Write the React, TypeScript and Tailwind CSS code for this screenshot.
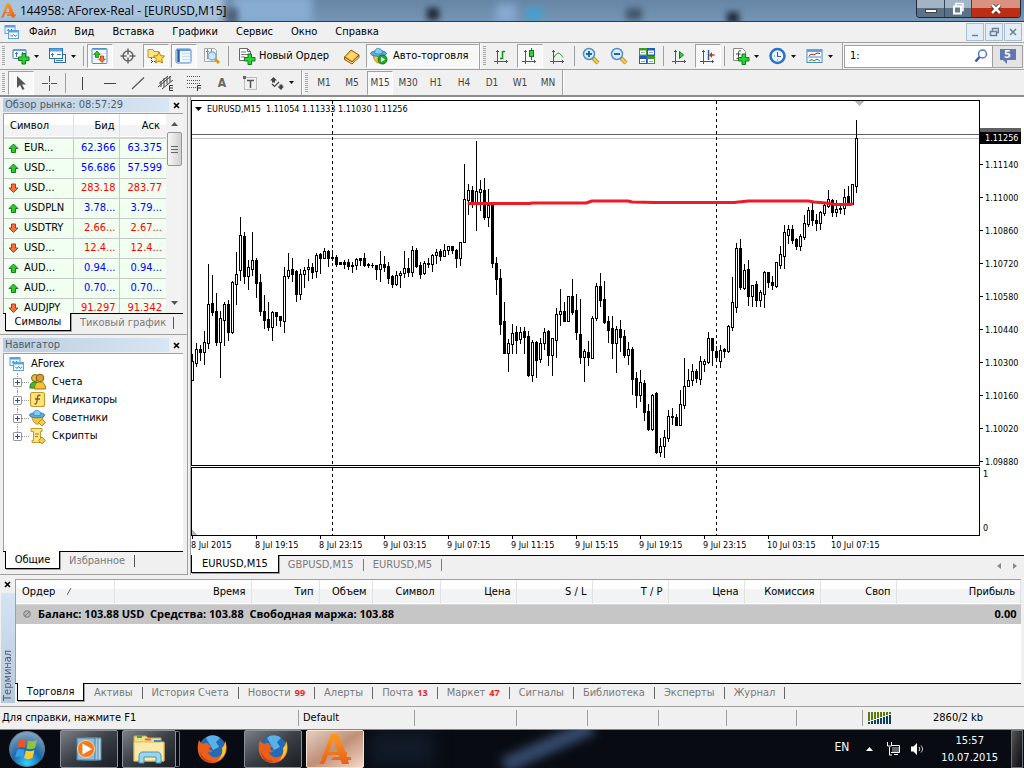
import React from "react";

type Candle = [number, number, number, number, 0 | 1];

const FIRST_X = 192;
const STEP = 4;

/* high, body top, body bottom, low, filled */
const candles: Candle[] = [
  [354,361,380,380,0],[343,349,363,366,0],[345,349,352,360,1],[331,342,352,364,0],[264,304,343,348,0],
  [275,303,312,315,1],[293,311,342,345,1],[311,318,342,377,0],[302,304,320,345,0],[300,304,332,340,1],
  [281,282,332,333,0],[252,274,284,304,0],[217,235,270,280,0],[232,236,276,283,1],[260,267,276,289,0],
  [232,260,269,275,0],[258,260,283,297,1],[274,282,311,315,1],[295,311,320,328,1],[302,319,327,330,1],
  [311,312,327,340,0],[312,312,316,325,1],[316,316,320,326,1],[267,276,321,332,0],[253,270,276,278,0],
  [258,269,274,281,1],[270,271,294,301,1],[269,274,294,299,0],[267,270,274,287,0],[259,267,269,280,0],
  [263,267,272,278,1],[253,255,271,277,0],[253,254,258,273,1],[248,251,258,258,0],[250,251,258,266,1],
  [250,257,258,260,1],[255,257,264,266,1],[262,262,264,264,1],[260,262,264,268,1],[259,262,266,269,1],
  [262,265,266,272,1],[258,259,265,269,0],[258,258,260,265,1],[253,258,265,266,1],[263,264,265,267,1],
  [263,265,265,267,1],[265,265,269,279,1],[251,264,269,281,0],[256,264,267,271,1],[262,266,278,283,1],
  [275,276,284,287,1],[271,275,284,285,0],[271,273,275,287,0],[251,268,273,277,0],[258,268,272,276,1],
  [246,250,272,276,0],[248,250,266,267,1],[262,265,274,278,1],[261,263,273,274,0],[258,263,264,267,1],
  [254,255,264,271,0],[249,252,255,263,0],[249,251,256,260,1],[244,250,256,256,0],[246,246,250,254,0],
  [246,246,250,253,1],[249,250,258,267,1],[242,242,258,265,0],[164,199,242,242,0],[184,190,200,214,0],
  [186,190,202,207,1],[141,191,203,230,0],[180,189,192,210,0],[178,190,217,219,1],[189,205,217,226,0],
  [204,205,263,267,1],[257,263,279,294,1],[269,278,324,334,1],[302,321,353,353,1],[339,343,353,371,0],
  [324,333,344,353,0],[326,332,340,353,1],[327,332,339,343,0],[327,331,337,353,1],[331,336,375,376,1],
  [340,342,375,381,0],[341,342,360,377,1],[338,343,359,362,0],[328,332,343,349,0],[330,331,355,365,1],
  [338,338,355,375,0],[308,314,340,357,0],[289,311,314,325,0],[302,311,321,321,1],[296,296,321,321,0],
  [279,296,312,314,1],[294,310,332,339,1],[299,334,357,363,1],[349,351,357,381,0],[341,352,357,365,1],
  [316,318,358,358,0],[283,286,318,320,0],[273,286,300,306,1],[281,299,322,323,1],[316,321,330,342,1],
  [316,328,343,358,1],[326,329,343,372,0],[320,329,337,351,1],[330,336,355,357,1],[342,349,355,364,0],
  [347,349,379,394,1],[372,378,395,407,1],[370,382,395,401,0],[380,383,412,420,1],[404,411,429,430,1],
  [394,395,429,430,0],[392,393,452,453,1],[438,446,452,456,0],[430,437,446,457,0],[410,416,438,441,0],
  [408,416,417,424,1],[414,417,425,425,1],[390,404,425,425,0],[358,386,405,408,0],[369,380,386,386,0],
  [364,371,380,385,0],[369,371,378,382,1],[356,361,379,384,0],[359,361,364,371,0],[332,338,362,363,0],
  [338,338,350,365,1],[346,351,357,360,1],[345,350,361,367,0],[348,349,351,357,1],[325,326,351,352,0],
  [277,302,327,330,0],[243,248,307,312,0],[239,248,287,289,1],[264,270,288,289,0],[260,269,296,305,1],
  [285,285,296,306,0],[281,284,300,306,1],[290,292,300,306,0],[271,272,294,307,0],[272,272,282,287,1],
  [276,282,285,289,1],[262,262,286,287,0],[246,254,265,268,0],[225,232,256,268,0],[225,229,235,243,0],
  [225,229,240,243,1],[238,239,246,249,1],[234,236,246,250,0],[215,223,237,239,0],[207,210,224,226,0],
  [203,210,220,225,1],[214,220,223,230,1],[211,212,223,229,0],[202,205,213,215,0],[190,199,206,207,0],
  [199,200,212,216,1],[200,209,212,216,0],[204,208,209,213,1],[189,197,208,214,0],[186,196,204,205,1],
  [184,184,204,204,0],[120,138,186,192,0],
];

const prices = ["1.11140","1.11000","1.10860","1.10720","1.10580","1.10440","1.10300","1.10160","1.10020","1.09880"];
const times = ["8 Jul 2015","8 Jul 19:15","8 Jul 23:15","9 Jul 03:15","9 Jul 07:15","9 Jul 11:15","9 Jul 15:15","9 Jul 19:15","9 Jul 23:15","10 Jul 03:15","10 Jul 07:15"];

const quotes: { s: string; bid: string; ask: string; up: boolean }[] = [
  { s: "EUR...", bid: "62.366", ask: "63.375", up: true },
  { s: "USD...", bid: "56.686", ask: "57.599", up: true },
  { s: "USD...", bid: "283.18", ask: "283.77", up: false },
  { s: "USDPLN", bid: "3.78...", ask: "3.79...", up: true },
  { s: "USDTRY", bid: "2.66...", ask: "2.67...", up: false },
  { s: "USD...", bid: "12.4...", ask: "12.4...", up: false },
  { s: "AUD...", bid: "0.94...", ask: "0.94...", up: true },
  { s: "AUD...", bid: "0.70...", ask: "0.70...", up: true },
  { s: "AUDJPY", bid: "91.297", ask: "91.342", up: false },
];

/* ---------- drawings ---------- */

function Svg({ w = 18, h = 18, children }: { w?: number; h?: number; children: React.ReactNode }) {
  return (
    <svg width={w} height={h} viewBox={`0 0 ${w} ${h}`} fill="none" className="block shrink-0" aria-hidden="true">
      {children}
    </svg>
  );
}

const Plus = ({ x, y }: { x: number; y: number }) => (
  <path transform={`translate(${x} ${y})`} d="M4 .5h3.500V4H11v3.500H7.500V11H4V7.500H.5V4H4Z" fill="#2fd23a" stroke="#0b7d12" />
);

const ALogo = ({ size = 16 }: { size?: number }) => (
  <svg width={size} height={size} viewBox="0 0 32 32" className="block shrink-0" aria-hidden="true">
    <defs>
      <linearGradient id="alogo" x1="0" y1="0" x2="0" y2="1"><stop offset="0" stopColor="#fb9a20" /><stop offset="1" stopColor="#e8601c" /></linearGradient>
    </defs>
    <path fill="url(#alogo)" d="M12 1h7l7.500 18H28v3h-1l1 2h4v3h-3l1 4h-7l-1.500-4H12l2-3h6.500l-1-2H8l2-3h8.500L14.500 7 6 29.500 4.500 31H0l2-3Z" />
  </svg>
);

const DocCharts = () => (
  <Svg w={16} h={16}>
    <rect x="1" y="1.500" width="10" height="8" fill="#eaf4fc" stroke="#5ba2e0" />
    <path d="M1 2.500h10" stroke="#5ba2e0" strokeWidth="2" />
    <path d="M3 6.500l2-1 1 1.500 2-2" stroke="#2d78bd" />
    <rect x="4.500" y="6.500" width="10" height="8" fill="#fff" stroke="#5ba2e0" />
    <path d="M4.500 7.500h10" stroke="#5ba2e0" strokeWidth="2" />
    <path d="M6 10.500l2 2 1.500-2 2 2 1.500-2" stroke="#2d78bd" />
  </Svg>
);

const NewChartIcon = () => (
  <Svg>
    <rect x="1" y="2.500" width="13" height="9" rx="1" fill="#fff" stroke="#3a78b8" />
    <path d="M1 3h13" stroke="#5b9fdc" strokeWidth="2" />
    <path d="M4.500 5v5M3 6.500h3M10.500 5v3" stroke="#4a78a8" />
    <Plus x={6} y={6} />
  </Svg>
);
const ProfilesIcon = () => (
  <Svg>
    <rect x="5.500" y="7.500" width="11" height="8" fill="#e9f3fb" stroke="#2b6cab" />
    <rect x=".5" y="1.500" width="13" height="10" fill="#fff" stroke="#2b6cab" />
    <path d="M1 3h12" stroke="#5ea4df" strokeWidth="3" />
    <path d="M3.500 6v4M2 7.500h3M8 7.500h4M7 13.500h7" stroke="#4a78a8" />
  </Svg>
);
const MarketIcon = () => (
  <Svg>
    <rect x="1" y="1.500" width="15" height="15" rx="1" fill="#f7fbff" stroke="#4a90d0" />
    <path d="M1.500 2h14" stroke="#4a90d0" strokeWidth="1.500" />
    <path d="M3 6.500h12M3 9.500h12M3 12.500h12" stroke="#dbe6f0" />
    <path d="M6 4 9.300 7.500H7.500v3h-3v-3H2.700Z" fill="#31c32b" stroke="#17791a" strokeWidth=".8" />
    <path d="M11 15.500 7.700 12h1.800V9h3v3h1.800Z" fill="#f9753d" stroke="#b03800" strokeWidth=".8" />
  </Svg>
);
const TargetIcon = () => (
  <Svg>
    <circle cx="9" cy="9" r="5" stroke="#666" strokeWidth="1.500" />
    <path d="M9 1.500v6M9 10.500v6M1.500 9h6M10.500 9h6" stroke="#666" strokeWidth="1.500" />
  </Svg>
);
const StarFolderIcon = () => (
  <Svg>
    <path d="M1 2.500h5l1 2h5v6H1Z" fill="#f9e58a" stroke="#c39a14" />
    <path d="M4.500 11v6M5 14.500h3" stroke="#333" strokeDasharray="1 1" />
    <path d="m12 5 1.700 3.600 3.800.5-2.800 2.700.8 4.200-3.500-2-3.500 2 .8-4.200L6.500 9.100l3.800-.5Z" fill="#ffd94e" stroke="#b9820a" />
  </Svg>
);
const NavIcon = () => (
  <Svg>
    <rect x="1" y="2" width="15" height="14" rx="1.500" fill="#eef6fe" stroke="#4a86c4" />
    <path d="M1.500 3h14" stroke="#5c9edc" strokeWidth="2" />
    <path d="M3.500 3v12" stroke="#2a5fa0" strokeWidth="2.500" />
    <path d="M7 6.500h8M7 9.500h8M7 12.500h8" stroke="#cfdeec" />
  </Svg>
);
const TesterIcon = () => (
  <Svg>
    <path d="M1.500 1.500h10l2 2v11h-12Z" fill="#f2f2f2" stroke="#a8a8a8" />
    <path d="M4.500 2v10M8.500 2v10M3 4.500h3M7 7.500h3" stroke="#888" />
    <path d="m12 12 4 4" stroke="#d19d1b" strokeWidth="3" />
    <circle cx="9" cy="9" r="4" fill="#cfe7fa" stroke="#7fb0da" strokeWidth="1.500" />
  </Svg>
);
const OrderIcon = () => (
  <Svg>
    <path d="M1.500 1.500h8l3 3v9h-11Z" fill="#fff" stroke="#666" />
    <path d="M9.500 1.500v3h3" stroke="#666" />
    <path d="M3 5h5M3 7.500h7M3 10h4" stroke="#777" />
    <Plus x={6} y={6.500} />
  </Svg>
);
const BookIcon = () => (
  <Svg>
    <path d="M1.500 10 8 3l8 5-7 7Z" fill="#f3b83c" stroke="#9a6207" />
    <path d="M1.500 10v2.500L9 17l7-6.500V8l-7 7Z" fill="#c27c14" stroke="#8a5606" />
    <path d="m3.500 9.800 5-5.300 5.500 3.500-5 5Z" fill="#ffd976" />
    <path d="m2 11.500 7 4.500 6.500-6" stroke="#ffe9a8" />
  </Svg>
);
const Hat = () => (
  <>
    <path d="M3 8c1 5 3 8 6 8s5-4 6-8Z" fill="#f2c83c" stroke="#b98a12" />
    <ellipse cx="8.500" cy="6.500" rx="8" ry="2.800" fill="#5aaee0" stroke="#2f80b4" />
    <path d="M4.500 6C5 2 6.500 1 8.500 1.500S12 2 12.500 6c-2 1.500-6 1.500-8 0Z" fill="#86cdf2" stroke="#2f80b4" strokeWidth=".8" />
  </>
);
const AutoIcon = () => (
  <Svg>
    <Hat />
    <circle cx="12.500" cy="12.500" r="4.500" fill="#25ab2a" stroke="#0d7413" />
    <path d="m11 10 4 2.500-4 2.500Z" fill="#fff" />
  </Svg>
);
const Axes = () => <path d="M4.500 3v14M1 14.500h14M3 4.500h3M13.500 13v3" stroke="#555" />;
const BarsIcon = () => (<Svg><Axes /><path d="M9.500 4v8M9.500 4.500H12M7 11.500h2.500" stroke="#119016" strokeWidth="1.500" /></Svg>);
const CandleIcon = () => (<Svg><Axes /><path d="M10.500 1v12" stroke="#0b7d12" /><rect x="8.500" y="3.500" width="4" height="6" fill="#2fd23a" stroke="#0b7d12" /></Svg>);
const LineIcon = () => (<Svg><Axes /><path d="M4.500 11c2-3 4-6 6-4.500S13 9 14 10.500" stroke="#119016" /></Svg>);
const ZoomIcon = ({ plus }: { plus?: boolean }) => (
  <Svg>
    <path d="m11 11 5 5" stroke="#b08a20" strokeWidth="4" />
    <path d="m11 11 5 5" stroke="#f2ca43" strokeWidth="2.500" />
    <circle cx="7" cy="7" r="5.500" fill="#d8eefc" stroke="#4d8fcb" strokeWidth="1.500" />
    <path d={plus ? "M4 7h6M7 4v6" : "M4 7h6"} stroke="#2465a4" strokeWidth="2" />
  </Svg>
);
const TileIcon = () => (
  <Svg>
    <rect x="1" y="1" width="8" height="8" fill="#3d9a24" /><rect x="9" y="1" width="8" height="8" fill="#2458c7" />
    <rect x="1" y="9" width="8" height="8" fill="#2458c7" /><rect x="9" y="9" width="8" height="8" fill="#3d9a24" />
    <path d="M2 5.500h6M10 5.500h6M2 14h6M10 14h6" stroke="#fff" strokeWidth="4" />
    <path d="M3 5.500h4M11 5.500h4M3 14.500h4M11 14.500h4" stroke="#9ab" />
  </Svg>
);
const ScrollIcon = () => (<Svg><Axes /><path d="m8.500 4.500 4 3.500-4 3.500Z" fill="#2fd23a" stroke="#0b7d12" /></Svg>);
const ShiftIcon = () => (
  <Svg><Axes /><path d="M9.500 3v10" stroke="#1c62ad" strokeWidth="1.500" /><path d="M10 8 13 5v6Z" fill="#c43a10" /><path d="M12 8h3.500" stroke="#c43a10" strokeWidth="1.500" /></Svg>
);
const IndicatorIcon = () => (
  <Svg>
    <path d="M1.500 1.500h9l3 3v9h-12Z" fill="#fff" stroke="#888" />
    <path d="M9 4c-3-1-2.500 2-2.500 4s0 4-2 3.500M4 7h4.500" stroke="#333" />
    <Plus x={6} y={6.500} />
  </Svg>
);
const ClockIcon = () => (
  <Svg>
    <circle cx="8.500" cy="9" r="7" fill="#e8f4ff" stroke="#2a72c8" strokeWidth="2.500" />
    <path d="M8.500 5v4.500H12" stroke="#555" />
    <path d="M5 9h1M8.500 12.500v1" stroke="#777" />
  </Svg>
);
const TemplateIcon = () => (
  <Svg>
    <rect x="1" y="2.500" width="15" height="13" fill="#fff" stroke="#4a86c4" />
    <path d="M1 3.500h15" stroke="#5ea4df" strokeWidth="3" />
    <path d="m3 8.500 3-1.500 2 1 3-2 3 .5" stroke="#9a2010" />
    <path d="M2 10h13" stroke="#4a86c4" />
    <path d="m3 14 3-1.500 2 1.500 3-2 3 2" stroke="#1a8a20" />
  </Svg>
);
const Arrow = ({ up }: { up: boolean }) => (
  <Svg w={11} h={11}>
    {up ? (
      <path d="M5.500 1 10 5.500H7.500v4h-4v-4H1Z" fill="#35c435" stroke="#147b18" strokeWidth="1" />
    ) : (
      <path d="M5.500 9.500 1 5h2.500V1h4v4H10Z" fill="#f8703c" stroke="#ab3c10" strokeWidth="1" />
    )}
  </Svg>
);

/* line studies */
const CursorIcon = () => <Svg w={16} h={16}><path d="M4 1v12l3-3 2.500 5 2-1L9 9.500h4Z" fill="#555" /></Svg>;
const CrossIcon = () => <Svg w={16} h={16}><path d="M8.500 1v6M8.500 10v6M1 8.500h6M10 8.500h6M8 8.500h1" stroke="#555" /></Svg>;
const VLineIcon = () => <Svg w={16} h={16}><path d="M8.500 2v13" stroke="#444" /></Svg>;
const HLineIcon = () => <Svg w={16} h={16}><path d="M2 8.500h12" stroke="#444" /></Svg>;
const DiagIcon = () => <Svg w={16} h={16}><path d="M2 14 14 2.500" stroke="#555" strokeWidth="1.200" /></Svg>;
const ChannelIcon = () => (
  <Svg w={16} h={16}>
    <path d="M0 12 13 1M1 8.500 10 1M4 14 15 5M3 6v6M6 3v9M9 2v7M12 1v6" stroke="#444" />
    <path d="M15 10.500h-3.500v5H15M12 13h3" stroke="#333" />
  </Svg>
);
const FibIcon = () => (
  <Svg w={16} h={16}>
    <path d="M1 1.500h13M1 5.500h13M1 8.500h13M1 12.500h9" stroke="#555" strokeDasharray="1 1" />
    <path d="M11.500 16v-5.500H15M12 13h3" stroke="#333" />
  </Svg>
);
const TextBoxIcon = () => (
  <Svg w={16} h={16}>
    <rect x="2.500" y="2.500" width="12" height="12" stroke="#888" strokeDasharray="1 1" />
    <path d="M1 1h3v3H1z" fill="#666" />
    <path d="M5 5.500h7M8.500 6v7" stroke="#555" strokeWidth="1.500" />
  </Svg>
);
const ArrowsIcon = () => (
  <Svg w={16} h={16}>
    <path d="M4.500 2 8 5.500H6v2H3v-2H1ZM12 15 8.500 11.500h2v-2h3v2H15Z" fill="#444" />
    <path d="m3 9 2.500 2.500L10 7" stroke="#444" strokeWidth="1.200" />
  </Svg>
);

const AccountsIcon = () => (
  <Svg>
    <circle cx="6" cy="5" r="3.500" fill="#e8b74d" stroke="#8a6510" /><path d="M1 15c0-5 2-6 5-6s5 2 5 6Z" fill="#3fbf30" stroke="#1c7c18" />
    <circle cx="11" cy="5" r="3.800" fill="#d9a030" stroke="#7c5a0c" /><path d="M5.500 16c0-5 2-7 5.500-7s5.500 2 5.500 7Z" fill="#f3c437" stroke="#9a7208" />
  </Svg>
);
const FxIcon = () => (
  <Svg>
    <rect x="1.500" y="1.500" width="14" height="14" rx="2" fill="#fbe27a" stroke="#c49a2a" strokeWidth="1.200" />
    <path d="M11.500 4.500c-3-1-3 1-3.300 4s-.7 5-2.700 4.500M6 8h5" stroke="#7c5c10" strokeWidth="1.300" />
  </Svg>
);
const AdvisorIcon = () => <Svg><g transform="scale(.95)"><Hat /></g><path d="m13 10 3.500 3.500L13 17l-3.500-3.500Z" fill="#f4cf4a" stroke="#b88c1a" /></Svg>;
const ScriptIcon = () => (
  <Svg>
    <path d="M2 1.500h11v3h-1.500v9H13v2H3v-2h1.500v-9H2Z" fill="#fbe68c" stroke="#c09a24" />
    <path d="M6 7h4M6 9.500h3" stroke="#a8801c" />
    <path d="m13 10 3.500 3.500L13 17l-3.500-3.500Z" fill="#f4cf4a" stroke="#b88c1a" />
  </Svg>
);
const Firefox = () => (
  <Svg w={32} h={32}>
    <circle cx="16.500" cy="16" r="13.500" fill="#2469b5" />
    <path d="M10 5c4-4 11-3 14 0l-4 4 3 5-6 3Z" fill="#5ab0e8" />
    <path d="M3 7c-2 6-2 13 2 18 5 6 15 7 21 1 5-5 6-12 3-18 0 3-1 4-1 4 0 6-2 11-7 12-5 1-8-2-9-5 2 1 4 0 5-1-2 0-4-1-4-3 0-1 2-1 3-2-3-1-4-1-4-3-3 0-4 0-5 1-2-1-3-2-4-4Z" fill="#e8601c" />
    <path d="M29 8c3 8 0 17-8 20 4-3 6-8 5-13 2-2 3-4 3-7Z" fill="#fbc52c" />
    <path d="M4 18c2 7 7 10 13 10-7 3-13-3-13-10Z" fill="#c53c12" />
  </Svg>
);
const Caret = () => <Svg w={5} h={3}><path d="M0 0h5L2.500 3Z" fill="#111" /></Svg>;
const CloseX = () => <Svg w={7} h={7}><path d="m1 1 5 5M6 1 1 6" stroke="#000" strokeWidth="1.700" /></Svg>;

/* ---------- toolbar parts ---------- */

const pressed = "border border-[#a0a0a0] border-r-white border-b-white bg-[#f8f8f8]";

function Tool({ label, on, children }: { label: string; on?: boolean; children: React.ReactNode }) {
  return (
    <button aria-label={label} className={`mx-px flex h-6 w-[26px] shrink-0 items-center justify-center text-[#444] ${on ? pressed : ""}`}>
      {children}
    </button>
  );
}
function DropTool({ label, children }: { label: string; children: React.ReactNode }) {
  return (
    <button aria-label={label} className="flex h-6 w-[37px] shrink-0 items-center gap-1 pl-[5px]">
      {children}
      <Caret />
    </button>
  );
}
const Sep = () => <div className="mx-[2px] h-5 w-px shrink-0 bg-[#a0a0a0]" />;
const Grip = () => (
  <div className="mx-[2px] h-5 w-[3px] shrink-0 bg-[repeating-linear-gradient(to_bottom,#a8a8a8_0px,#a8a8a8_1px,#f0f0f0_1px,#f0f0f0_2px)]" />
);
const BandEnd = () => <div className="w-[2px] shrink-0 self-stretch border-l border-[#a0a0a0] bg-white" />;

function PanelTitle({ children, close }: { children: React.ReactNode; close: string }) {
  return (
    <div className="flex h-4 items-center">
      <h2 className="flex h-[14px] flex-1 items-center bg-linear-to-r from-[#bccede] to-[#d8e5f3] pl-[2px] text-[#4c5c6c]">{children}</h2>
      <button aria-label={close} className="flex w-[14px] items-center justify-center"><CloseX /></button>
    </div>
  );
}

const tabOn = "relative -top-px h-[18px] border border-t-0 border-black bg-white text-black shadow-[1px_1px_0_#a0a0a0]";

/* ---------- chart ---------- */

function PricePlot() {
  return (
    <svg width="100%" height="100%" shapeRendering="crispEdges" className="absolute inset-0 block" role="img" aria-label="EURUSD M15">
      <g transform="translate(-192 -101)">
        <path d="M192 134.500H2000" stroke="#606060" />
        <path d="M192 138.500H2000" stroke="#c0c0c0" />
        <path d="M332.500 101V1200M716.500 101V1200" stroke="#000" strokeDasharray="3 3" />
        {candles.map(([hi, top, bot, lo, fill], i) => {
          const x = FIRST_X + i * STEP;
          const h = bot - top + 1;
          return (
            <g key={x}>
              <rect x={x} y={hi} width="1" height={lo - hi + 1} fill="#000" />
              <rect x={x - 1} y={top} width="3" height={h} fill="#000" />
              {!fill && h > 2 && <rect x={x} y={top + 1} width="1" height={h - 2} fill="#fff" />}
            </g>
          );
        })}
        <path d="M855 101h9l-4.500 5Z" fill="#b8b8b8" />
        <path
          d="M469 203.500H530L532 203 586 203 592 201 628 201 632 202 655 202.500H734L748 201H808L814 202 826 203 836 204.500H850L852 204"
          fill="none" stroke="#ed1c24" strokeWidth="3" strokeLinecap="round" strokeLinejoin="round" shapeRendering="auto"
        />
      </g>
    </svg>
  );
}

function ChartArea() {
  return (
    <section className="flex min-w-0 flex-1 flex-col border-l border-[#a0a0a0] bg-white">
      <div className="flex min-h-0 flex-1 pt-[3px] pr-[3px]">
        <div className="flex min-w-0 flex-1 flex-col">
          <div className="relative min-h-0 flex-1 overflow-hidden border border-black">
            <PricePlot />
            <h1 className="relative flex h-[15px] items-center gap-[5px] pl-[3px] text-[9px] text-black">
              <Svg w={7} h={4}><path d="M0 0h7L3.500 4Z" fill="#000" /></Svg>
              <span className="whitespace-pre">EURUSD,M15  1.11054 1.11333 1.11030 1.11256</span>
            </h1>
          </div>
          <div className="relative mt-px h-[69px] shrink-0 border border-black">
            <svg width="100%" height="100%" className="block" shapeRendering="crispEdges" aria-hidden="true">
              <path d="M140.500 0v80M524.500 0v80" stroke="#000" strokeDasharray="3 3" />
              <path d="M0 62l5 5H0Z" fill="#b8b8b8" />
            </svg>
          </div>
          <ol className="flex h-[19px] shrink-0 overflow-hidden text-[9px] leading-[18px]">
            {times.map((t) => (
              <li key={t} className="relative w-16 shrink-0 whitespace-nowrap before:absolute before:left-px before:top-0 before:h-[3px] before:w-px before:bg-black">
                {t}
              </li>
            ))}
          </ol>
        </div>
        <div className="flex w-[41px] shrink-0 flex-col text-[9px]">
          <div className="mt-[28px] h-[4px] shrink-0 bg-[#606060]" />
          <div className="h-3 shrink-0 bg-black pl-[5px] leading-3 text-white">1.11256</div>
          <ol className="mt-1 -mb-4 shrink-0">
            {prices.map((p) => (
              <li key={p} className="flex h-[33px] items-center before:mr-[2px] before:h-px before:w-[3px] before:bg-black">{p}</li>
            ))}
          </ol>
          <div className="mt-auto mb-[21px] flex h-[66px] shrink-0 flex-col justify-between pl-[3px] leading-[12px]">
            <span>1</span>
            <span>0</span>
          </div>
        </div>
      </div>
      <nav aria-label="Графики" className="flex h-[20px] shrink-0 items-start border-t border-black bg-[#f0f0f0] text-[#7a7a7a]">
        <button className={`${tabOn} mr-[9px] px-[10px]`}>EURUSD,M15</button>
        <button className="h-[18px]">GBPUSD,M15</button>
        <i className="mx-[9px] mt-[3px] h-3 w-px bg-[#7a7a7a]" />
        <button className="h-[18px]">EURUSD,M5</button>
        <i className="mx-[9px] mt-[3px] h-3 w-px bg-[#7a7a7a]" />
        <span className="mr-[7px] ml-auto flex gap-3 pt-[7px]">
          <Svg w={4} h={6}><path d="M4 0v6L0 3Z" fill="#888" /></Svg>
          <Svg w={4} h={6}><path d="M0 0v6l4-3Z" fill="#888" /></Svg>
        </span>
      </nav>
    </section>
  );
}

/* ---------- side panels ---------- */

function MarketWatch() {
  return (
    <section className="flex h-[238px] shrink-0 flex-col border-b border-[#a0a0a0] pl-[3px] pr-1">
      <PanelTitle close="Закрыть обзор рынка">Обзор рынка: 08:57:29</PanelTitle>
      <div className="flex h-[200px] shrink-0 border-t border-l border-[#a0a0a0] bg-white">
        <div className="h-full flex-1 overflow-hidden">
          <table className="w-full table-fixed border-collapse">
            <thead>
              <tr className="h-6 border-b-2 border-[#d4d4d4] bg-linear-to-b from-white from-50% to-[#f1f3f5] to-50%">
                <th className="w-[69px] border-r border-[#dfdfdf] pl-[6px] text-left font-normal">Символ</th>
                <th className="w-[46px] border-r border-[#dfdfdf] pr-1 text-right font-normal">Бид</th>
                <th className="pr-[6px] text-right font-normal">Аск</th>
              </tr>
            </thead>
            <tbody>
              {quotes.map((q, i) => (
                <tr key={i} className={`h-5 border-b border-[#c8c8c8] bg-[#f0fff0] ${q.up ? "text-[#0000ff]" : "text-[#ff0000]"}`}>
                  <td className="border-r border-[#c8c8c8] pl-1 text-black"><span className="flex items-center gap-[5px]"><Arrow up={q.up} />{q.s}</span></td>
                  <td className="border-r border-[#c8c8c8] pr-[3px] text-right">{q.bid}</td>
                  <td className="pr-1 text-right">{q.ask}</td>
                </tr>
              ))}
            </tbody>
          </table>
        </div>
        <div className="flex w-[17px] flex-col items-center justify-between bg-[#f2f2f2] py-2">
          <Svg w={7} h={4}><path d="M0 4h7L3.500 0Z" fill="#555" /></Svg>
          <div className="mt-[6px] mb-auto flex h-[34px] w-[15px] flex-col items-center justify-center gap-px rounded-[2px] border border-[#979797] bg-linear-to-r from-[#f6f6f6] to-[#d0d0d0]">
            <i className="h-px w-[7px] bg-[#666]" /><i className="mt-px h-px w-[7px] bg-[#666]" /><i className="mt-px h-px w-[7px] bg-[#666]" />
          </div>
          <Svg w={7} h={4}><path d="M0 0h7L3.500 4Z" fill="#555" /></Svg>
        </div>
      </div>
      <nav aria-label="Обзор рынка" className="flex h-5 items-start border-t border-black text-[#7a7a7a]">
        <button className={`${tabOn} ml-[2px] mr-[9px] w-[66px] shrink-0`}>Символы</button>
        <button className="h-[18px] whitespace-nowrap">Тиковый график</button>
        <i className="ml-[7px] mt-[3px] h-3 w-px bg-[#555]" />
      </nav>
    </section>
  );
}

function Navigator() {
  const items = [
    ["Счета", <AccountsIcon key="a" />],
    ["Индикаторы", <FxIcon key="b" />],
    ["Советники", <AdvisorIcon key="c" />],
    ["Скрипты", <ScriptIcon key="d" />],
  ] as const;
  return (
    <section className="flex min-h-0 flex-1 flex-col border-b border-[#a0a0a0] pl-[3px] pr-1 pt-[2px]">
      <PanelTitle close="Закрыть навигатор">Навигатор</PanelTitle>
      <div className="min-h-0 flex-1 border-t border-l border-[#a0a0a0] bg-white pt-px">
        <div className="flex h-[18px] items-center gap-[6px] pl-[5px]"><DocCharts />AForex</div>
        <ul>
          {items.map(([name, icon], i) => (
            <li key={name} className="flex h-[18px] items-center">
              <span className={`ml-[13px] w-px self-stretch border-l border-dotted border-[#999] ${i === 3 ? "mb-[9px]" : ""}`} />
              <button aria-label={`Развернуть ${name}`} className="relative -ml-[5px] flex size-[9px] items-center justify-center rounded-[1px] border border-[#979797] bg-white">
                <svg width="5" height="5" className="block" aria-hidden="true"><path d="M0 2.500h5M2.500 0v5" stroke="#2a4ea0" /></svg>
              </button>
              <i className="w-[7px] border-t border-dotted border-[#999]" />
              {icon}
              <span className="ml-[5px]">{name}</span>
            </li>
          ))}
        </ul>
      </div>
      <nav aria-label="Навигатор" className="flex h-[23px] shrink-0 items-start border-t border-black text-[#7a7a7a]">
        <button className={`${tabOn} ml-[2px] mr-[9px] w-[55px]`}>Общие</button>
        <button className="h-[18px]">Избранное</button>
        <i className="ml-[9px] mt-[3px] h-3 w-px bg-[#555]" />
      </nav>
    </section>
  );
}

/* ---------- terminal ---------- */

function Terminal() {
  const cols: [string, string][] = [
    ["Время", "w-[137px]"], ["Тип", "w-[68px]"], ["Объем", "w-[53px]"], ["Символ", "w-[68px]"], ["Цена", "w-[76px]"],
    ["S / L", "w-[76px]"], ["T / P", "w-[76px]"], ["Цена", "w-[76px]"], ["Комиссия", "w-[76px]"], ["Своп", "w-[76px]"], ["Прибыль", ""],
  ];
  const tabs: [string, string?][] = [
    ["Активы"], ["История Счета"], ["Новости", "99"], ["Алерты"], ["Почта", "13"], ["Маркет", "47"],
    ["Сигналы"], ["Библиотека"], ["Эксперты"], ["Журнал"],
  ];
  return (
    <section className="flex h-[132px] shrink-0 border-b border-[#a0a0a0] pr-[3px]">
      <div className="flex w-[15px] shrink-0 flex-col items-center pb-[3px]">
        <button aria-label="Закрыть терминал" className="flex h-[18px] shrink-0 items-center justify-center"><CloseX /></button>
        <h2 className="flex min-h-0 w-[14px] flex-1 items-center bg-linear-to-b from-[#d4e4f4] to-[#b8c8dc] text-[#4c5c6c] [writing-mode:vertical-rl]">
          <span className="h-full rotate-180 pt-[2px] leading-[14px]">Терминал</span>
        </h2>
      </div>
      <div className="flex min-w-0 flex-1 flex-col pt-1">
        <div className="min-h-0 flex-1 border-t border-l border-[#a0a0a0] bg-white">
          <table className="w-full table-fixed border-collapse">
            <thead>
              <tr className="h-6 border-b border-[#d4d4d4] bg-linear-to-b from-white from-40% to-[#f1f3f5] to-40%">
                <th className="w-[98px] border-r border-[#e2e2e2] pl-[6px] text-left font-normal">
                  <span className="flex items-center gap-3">Ордер<Svg w={8} h={7}><path d="M0 7 4 0" stroke="#666" /></Svg></span>
                </th>
                {cols.map(([c, w], i) => (
                  <th key={i} className={`${w} border-r border-[#e2e2e2] pr-[5px] text-right font-normal`}>{c}</th>
                ))}
              </tr>
            </thead>
            <tbody>
              <tr className="h-5 bg-[#c6c6c6] font-['Open_Sans',sans-serif] font-bold">
                <td colSpan={11} className="pl-[7px]">
                  <span className="flex items-center gap-[7px] whitespace-pre">
                    <Svg w={8} h={8}><circle cx="4" cy="4" r="3.300" fill="#bbb" stroke="#777" /><path d="m2 6 4-4" stroke="#777" /></Svg>
                    Баланс: 103.88 USD  Средства: 103.88  Свободная маржа: 103.88
                  </span>
                </td>
                <td className="pr-1 text-right">0.00</td>
              </tr>
            </tbody>
          </table>
        </div>
        <nav aria-label="Терминал" className="flex h-[23px] shrink-0 items-start border-t border-black text-[#7a7a7a]">
          <button className={`${tabOn} ml-[2px] mr-[10px] w-[67px] shrink-0`}>Торговля</button>
          {tabs.map(([t, n]) => (
            <React.Fragment key={t}>
              <button className="h-[18px] whitespace-nowrap">{t}{n && <b className="ml-1 font-['Open_Sans',sans-serif] text-[9px] text-[#f02020]">{n}</b>}</button>
              <i className="mx-[9px] mt-[3px] h-3 w-px bg-[#666]" />
            </React.Fragment>
          ))}
        </nav>
      </div>
    </section>
  );
}

/* ---------- taskbar ---------- */

const taskBtn = "flex h-[38px] items-center justify-center rounded-[2px] border border-[#8a9098] bg-linear-to-br from-[#7c8188] via-[#3a3f46] to-[#1a1e25]";

function Taskbar() {
  return (
    <footer className="relative flex h-[39px] shrink-0 items-center overflow-hidden border-t border-[#7a8a94] bg-[#080c12] text-white">
      <div className="absolute top-2 left-[500px] h-4 w-24 -rotate-[24deg] bg-[#34486a] blur-[5px]" />
      <div className="absolute top-0 left-[370px] h-9 w-16 bg-[#111a28] blur-[8px]" />
      <button aria-label="Пуск" className="relative ml-2 mr-[14px]">
        <Svg w={38} h={38}>
          <defs>
            <radialGradient id="orb" cx=".5" cy=".9" r=".9"><stop offset="0" stopColor="#2fd4ff" /><stop offset=".45" stopColor="#1668ac" /><stop offset="1" stopColor="#8ea7bd" /></radialGradient>
          </defs>
          <circle cx="19" cy="19" r="17.500" fill="url(#orb)" stroke="#5c7890" />
          <path d="M11 10c3-1.500 5-1 7.500 0L17 18c-3-1.500-5-1-8 0Z" fill="#e8562a" />
          <path d="M20 10.500c3 1 6 1 9-.5l-2 8c-3 1.500-6 1.500-8.500.5Z" fill="#8cc63c" />
          <path d="M9 20c3-1.500 5-1 7.500 0L15 27.500c-3-1.500-5-1-8 0Z" fill="#3d9ae8" />
          <path d="M18 20.500c3 1 5 1 8.500-.5l-2 8c-3 1.500-5.500 1.500-8.500 0Z" fill="#fbcb2e" />
        </Svg>
      </button>
      <button aria-label="Проигрыватель" className={`${taskBtn} relative mr-1 w-[58px]`}>
        <Svg w={32} h={32}>
          <path d="M12 5h16v22H12Z" fill="#b9d6e8" stroke="#5b8cab" /><path d="M9 5h16v22H9Z" fill="#a4cbe2" stroke="#5b8cab" /><path d="M4 5h18v22H4Z" fill="#8fbcd8" stroke="#4a80a4" />
          <circle cx="13" cy="16" r="8.500" fill="#f47a1c" stroke="#fbd0a0" /><path d="m9.500 10.500 9.500 5.500-9.500 5.500Z" fill="#fff" />
        </Svg>
      </button>
      <button aria-label="Проводник" className={`${taskBtn} relative w-[54px]`}>
        <Svg w={34} h={32}>
          <path d="M2 3h12l2 2h13v5h3v18H2Z" fill="#f5dd8a" stroke="#c8a84c" /><path d="M2 9h30v19H2Z" fill="#fbeaa8" stroke="#d8b95e" />
          <path d="M5 4h5" stroke="#3aa83a" strokeWidth="2" /><path d="M13 6.500h6" stroke="#e06a3a" strokeWidth="2" /><path d="M22 8h7" stroke="#3a8ad8" strokeWidth="2" />
          <path d="M7 30v-7c0-3 2-4 4-4h14c2 0 4 1 4 4v7h-5v-6H12v6Z" fill="#9ad4ef" stroke="#4a94b8" />
        </Svg>
      </button>
      <i className="relative h-9 w-1 rounded-r-[2px] border border-l-0 border-[#70767e]" />
      <button aria-label="Firefox" className="relative mx-[16px]"><Firefox /></button>
      <button aria-label="Firefox окно" className={`${taskBtn} relative mr-1 w-[58px]`}><Firefox /></button>
      <button aria-label="AForex" className="relative flex h-[38px] w-[58px] items-center justify-center rounded-[2px] border border-[#fbe4d2] bg-linear-to-br from-[#e0cfc4] via-[#c09078] to-[#f2d8c8]"><ALogo size={32} /></button>
      <span className="relative ml-auto pb-1 text-[12px]">EN</span>
      <span className="relative ml-[17px] flex items-center gap-[13px]">
        <Svg w={7} h={4}><path d="M0 4h7L3.500 0Z" fill="#fff" /></Svg>
        <Svg w={15} h={14}><path d="M5 3.500h8.500v7H5M8 12.500h4M3.500 5v8H6M1.500 0v4h4V0" stroke="#fff" /><path d="M6 5h7v5H6z" fill="#666" /></Svg>
      </span>
      <span className="relative ml-[9px]">
        <Svg w={16} h={14}><path d="M1 4.500h2.500L7 1v12L3.500 9.500H1Z" fill="#fff" /><path d="M9 5c1 1.500 1 2.500 0 4M11 3.500c2 2.500 2 4.500 0 7" stroke="#ddd" /></Svg>
      </span>
      <time className="relative mr-[13px] ml-[15px] text-center text-[11px] leading-[17px]">15:57<br />10.07.2015</time>
      <button aria-label="Свернуть все окна" className="relative mr-px h-[38px] w-3 border border-[#6a7078] bg-linear-to-br from-[#555] to-[#0a0c10]" />
    </footer>
  );
}

/* ---------- page ---------- */

export default function App() {
  const menu = ["Файл", "Вид", "Вставка", "Графики", "Сервис", "Окно", "Справка"];
  const frames = ["M1", "M5", "M15", "M30", "H1", "H4", "D1", "W1", "MN"];
  return (
    <div className="flex h-screen min-h-[600px] flex-col overflow-hidden bg-[#f0f0f0] font-['DejaVu_Sans_Condensed','DejaVu_Sans',sans-serif] text-[11px] leading-4 text-black">
      <header className="relative flex h-[22px] shrink-0 items-center overflow-hidden border-b border-[#303a44] bg-linear-to-b from-[#6786a5] to-[#7595b5]">
        <div className="absolute -top-2 -left-4 h-8 w-60 bg-[#a9c4de] blur-[5px]" />
        <div className="absolute -top-1 left-[232px] h-7 w-20 bg-[#88add2] blur-[4px]" />
        <div className="absolute top-2 left-[226px] h-4 w-3 bg-[#4d5f78] blur-[3px]" />
        <div className="absolute top-2 left-[427px] size-3 bg-[#1d2733] blur-[3px]" />
        <div className="absolute top-1 left-[496px] size-5 bg-[#86a9d2] blur-[4px]" />
        <div className="absolute top-2 left-[526px] h-3 w-4 bg-[#43a0cc] blur-[3px]" />
        <div className="absolute top-2 left-[626px] h-3 w-4 bg-[#42576c] blur-[3px]" />
        <div className="absolute top-3 left-[727px] h-3 w-3 bg-[#1c2a38] blur-[3px]" />
        <span className="relative ml-px mr-1"><ALogo size={15} /></span>
        <span className="relative font-['Open_Sans',sans-serif] text-[12px]">144958: AForex-Real - [EURUSD,M15]</span>
        <div className="relative mr-[3px] ml-auto flex h-[18px] self-start overflow-hidden rounded-b-[4px] border border-t-0 border-[#1d2a38]">
          <button aria-label="Свернуть" className="flex w-7 items-end justify-center border-r border-[#33475a] bg-linear-to-b from-[#a3b4c4] from-50% to-[#5b7188] to-50% pb-[4px]"><i className="h-[4px] w-3 border border-[#444] bg-white" /></button>
          <button aria-label="Развернуть" className="flex w-[27px] items-center justify-center border-r border-[#33475a] bg-linear-to-b from-[#a3b4c4] from-50% to-[#5b7188] to-50%">
            <Svg w={13} h={13}><rect x="4" y="1.500" width="7" height="7" stroke="#fff" strokeWidth="1.500" /><rect x="2" y="4.500" width="7" height="7" fill="#667b90" stroke="#fff" strokeWidth="2" /></Svg>
          </button>
          <button aria-label="Закрыть" className="flex w-12 items-center justify-center bg-linear-to-b from-[#d99180] from-45% to-[#bd2d16] to-50%"><Svg w={12} h={10}><path d="m2 1 8 8M10 1 2 9" stroke="#4a1c14" strokeWidth="4" /><path d="m2 1 8 8M10 1 2 9" stroke="#fff" strokeWidth="2.500" /></Svg></button>
        </div>
      </header>

      <nav aria-label="Меню" className="flex h-[21px] shrink-0 items-center border-b border-[#a0a0a0] pr-[2px]">
        <span className="mr-[9px] ml-1"><DocCharts /></span>
        <ul className="flex gap-[18px]">
          {menu.map((m) => <li key={m}><button>{m}</button></li>)}
        </ul>
        <div className="ml-auto flex gap-px">
          {["M2 8.500h6", "M3.500 4.500v-3h6v4H7M1.500 4.500h6v4h-6zM1 4.500h7", "m2 2 6 6M8 2 2 8"].map((d, i) => (
            <button key={d} aria-label={["Свернуть график", "Восстановить график", "Закрыть график"][i]} className="flex h-[18px] w-[18px] items-center justify-center border border-[#a9bccd] bg-[#e2edf8]">
              <Svg w={10} h={10}><path d={d} stroke="#6a8096" strokeWidth="1.500" /></Svg>
            </button>
          ))}
        </div>
      </nav>

      <div className="flex h-[27px] shrink-0 border-b border-[#a0a0a0]">
        <div className="flex w-[842px] shrink-0 items-center">
          <Grip />
          <DropTool label="Новый график"><NewChartIcon /></DropTool>
          <DropTool label="Профили"><ProfilesIcon /></DropTool>
          <Sep />
          <Tool label="Обзор рынка" on><MarketIcon /></Tool>
          <Tool label="Окно данных"><TargetIcon /></Tool>
          <Tool label="Навигатор" on><StarFolderIcon /></Tool>
          <Tool label="Терминал" on><NavIcon /></Tool>
          <Tool label="Тестер стратегий"><TesterIcon /></Tool>
          <Sep />
          <button className="flex h-6 w-[107px] shrink-0 items-center gap-[3px] pl-[7px] whitespace-nowrap"><OrderIcon />Новый Ордер</button>
          <Tool label="MetaEditor"><BookIcon /></Tool>
          <button className={`flex h-6 w-[113px] shrink-0 items-center gap-[5px] pl-[3px] whitespace-nowrap ${pressed}`}><AutoIcon />Авто-торговля</button>
          <BandEnd />
          <Grip />
          <Tool label="Бары"><BarsIcon /></Tool>
          <Tool label="Свечи" on><CandleIcon /></Tool>
          <Tool label="Линия"><LineIcon /></Tool>
          <Sep />
          <Tool label="Увеличить"><ZoomIcon plus /></Tool>
          <Tool label="Уменьшить"><ZoomIcon /></Tool>
          <Tool label="Расположить окна"><TileIcon /></Tool>
          <Sep />
          <Tool label="Автопрокрутка"><ScrollIcon /></Tool>
          <Tool label="Сдвиг графика" on><ShiftIcon /></Tool>
          <Sep />
          <DropTool label="Индикаторы"><IndicatorIcon /></DropTool>
          <DropTool label="Периоды"><ClockIcon /></DropTool>
          <DropTool label="Шаблоны"><TemplateIcon /></DropTool>
        </div>
        <BandEnd />
        <div className="flex min-w-0 flex-1 items-center pr-px">
          <label className="flex h-[23px] min-w-0 flex-1 items-center border border-[#a0a0a0] bg-white pr-1 pl-[5px]">
            <input aria-label="Поиск" defaultValue="1:" className="w-full min-w-0 bg-transparent outline-none" />
            <Svg w={14} h={14}><circle cx="8.500" cy="5" r="4" stroke="#5578c8" strokeWidth="1.500" /><path d="M5.500 8 1.500 12.500" stroke="#3558b0" strokeWidth="2.500" /></Svg>
          </label>
          <button aria-label="Сообщения" className="relative flex h-[23px] w-[30px] shrink-0 items-center justify-center border border-l-0 border-[#a0a0a0] bg-[#e4e4e4]">
            <svg width="16" height="16" viewBox="0 0 16 16" className="absolute block" aria-hidden="true"><path d="M0 1h16v11H7v4l-4-4H0Z" fill="#6078b0" /></svg>
            <b className="relative -mt-[3px] text-white">5</b>
          </button>
        </div>
      </div>

      <div className="flex h-[27px] shrink-0 items-center border-b-2 border-[#8c8c8c]">
        <Grip />
        <Tool label="Курсор" on><CursorIcon /></Tool>
        <Tool label="Перекрестие"><CrossIcon /></Tool>
        <Sep />
        <Tool label="Вертикальная линия"><VLineIcon /></Tool>
        <Tool label="Горизонтальная линия"><HLineIcon /></Tool>
        <Tool label="Трендовая линия"><DiagIcon /></Tool>
        <Tool label="Канал"><ChannelIcon /></Tool>
        <Tool label="Фибоначчи"><FibIcon /></Tool>
        <Tool label="Текст"><b className="text-[12px] text-[#666]">A</b></Tool>
        <Tool label="Метка"><TextBoxIcon /></Tool>
        <DropTool label="Стрелки"><ArrowsIcon /></DropTool>
        <BandEnd />
        <Grip />
        {frames.map((f) => <Tool key={f} label={f} on={f === "M15"}><span className="text-[10px]">{f}</span></Tool>)}
        <BandEnd />
      </div>

      <main className="flex min-h-0 flex-1">
        <aside className="mr-[2px] flex w-[188px] shrink-0 flex-col border-r border-[#a0a0a0]">
          <MarketWatch />
          <Navigator />
        </aside>
        <ChartArea />
      </main>

      <Terminal />

      <div className="flex h-[22px] shrink-0 items-center text-[11px]">
        <span className="w-[298px] shrink-0 pl-[2px]">Для справки, нажмите F1</span>
        <span className="h-4 w-[116px] shrink-0 border-l border-[#a0a0a0] pl-1">Default</span>
        <span className="h-4 w-[102px] border-l border-[#a0a0a0]" />
        <span className="h-4 w-[71px] border-l border-[#a0a0a0]" />
        <span className="h-4 w-[71px] border-l border-[#a0a0a0]" />
        <span className="h-4 w-[68px] border-l border-[#a0a0a0]" />
        <span className="h-4 w-[70px] border-l border-[#a0a0a0]" />
        <span className="h-4 flex-1 border-l border-[#a0a0a0]" />
        <span className="flex h-4 w-[162px] shrink-0 items-center border-l border-[#a0a0a0] pl-[5px]">
          <svg width="24" height="12" className="block" shapeRendering="crispEdges" aria-hidden="true">
            {[0, 1, 2, 3, 4, 5, 6, 7].map((i) => (
              <g key={i}>
                <rect x={i * 3} y="0" width="2" height={9 - i} fill="#5c7a0c" />
                <rect x={i * 3} y={10 - i} width="2" height={2 + i} fill="#0b3f66" />
              </g>
            ))}
          </svg>
          <span className="ml-auto pr-[41px]">2860/2 kb</span>
        </span>
      </div>

      <Taskbar />
    </div>
  );
}
